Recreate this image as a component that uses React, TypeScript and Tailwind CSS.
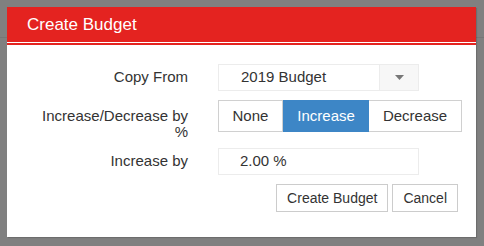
import React from 'react';

const font = { fontFamily: '"Liberation Sans", Arial, sans-serif' };

const App: React.FC = () => {
  return (
    <div className="relative w-[484px] h-[246px] overflow-hidden bg-[#808080]" style={font}>
      {/* page behind the overlay */}
      <div className="absolute left-0 right-0 top-[37px] h-px bg-[#767676]" />

      <div className="absolute left-[7px] top-[7px] w-[469px] h-[230px] bg-white flex flex-col shadow-[1px_1px_1px_rgba(0,0,0,0.15)]">
        <div className="h-[35px] bg-[#e42320] flex items-center pl-[20px]">
          <h2 className="text-[17px] text-white leading-none">Create Budget</h2>
        </div>
        <div className="h-px bg-white" />
        <div className="h-[2px] bg-[#e42320]" />

        <div className="pt-[19px] pl-[29px] pr-[18px] text-[15px] text-[#333]">
          <div className="flex items-center h-[27px]">
            <label className="w-[152px] shrink-0 text-right">Copy From</label>
            <div className="ml-[30px] w-[201px] h-[27px] flex border border-[#ececec]">
              <div className="flex-1 flex items-center pl-[22px]">2019 Budget</div>
              <div className="w-[39px] flex items-center justify-center border-l border-[#ececec] bg-[#f7f7f7]">
                <svg width="9" height="5" viewBox="0 0 9 5">
                  <path d="M0 0h9L4.5 5z" fill="#777" />
                </svg>
              </div>
            </div>
          </div>

          <div className="flex items-start mt-[9px]">
            <label className="w-[152px] shrink-0 text-right pt-[8px] leading-[16px] h-[40px]">Increase/Decrease by %</label>
            <div className="ml-[30px] flex h-[32px] shrink-0">
              <button className="px-[13.5px] border border-[#d0d0d0] bg-white text-[#333]">None</button>
              <button className="px-[13.5px] border border-[#3d86c6] bg-[#3d86c6] text-white">Increase</button>
              <button className="px-[13.5px] border border-[#d0d0d0] border-l-0 bg-white text-[#333]">Decrease</button>
            </div>
          </div>

          <div className="flex items-center mt-[8px] h-[27px]">
            <label className="w-[152px] shrink-0 text-right">Increase by</label>
            <div className="ml-[30px] w-[201px] h-[27px] flex items-center pl-[21px] border border-[#ececec]">2.00 %</div>
          </div>

          <div className="flex justify-end gap-[4px] mt-[9px]">
            <button className="h-[28px] px-[10px] border border-[#cccccc] bg-white text-[14px] text-[#333]">Create Budget</button>
            <button className="h-[28px] px-[10px] border border-[#cccccc] bg-white text-[14px] text-[#333]">Cancel</button>
          </div>
        </div>
      </div>
    </div>
  );
};

export default App;
